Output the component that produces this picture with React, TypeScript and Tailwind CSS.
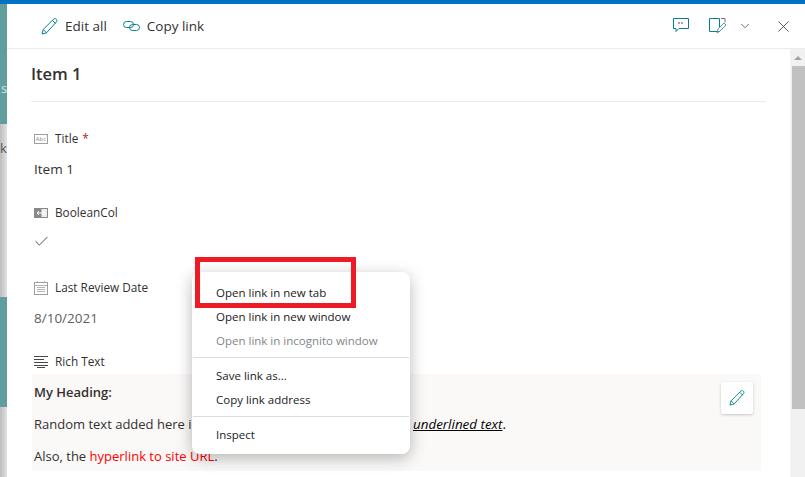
import { Check, ChevronDown, X } from 'lucide-react';

const sans = "font-['Open_Sans','Noto_Sans',sans-serif]";

function PencilIcon({ size }: { size: number }) {
  return (
    <svg width={size} height={size} viewBox="0 0 17 17" fill="none" stroke="#038387" strokeWidth="1">
      <path d="M1 16l1.200-4.500L12.500 1.200c.8-.8 2-.8 2.800 0s.8 2 0 2.800L5.500 14.800z" />
      <path d="M2.200 11.500l3.300 3.300M11.500 2.500l3 3" />
    </svg>
  );
}

function FieldLabel({ icon, children }: { icon: React.ReactNode; children: React.ReactNode }) {
  return (
    <div className="flex items-center h-5 text-[11.8px] text-[#323130]">
      <span className="w-[21px] ml-[3px] flex items-center">{icon}</span>
      {children}
    </div>
  );
}

function MenuItem({ label, muted }: { label: string; muted?: boolean }) {
  return (
    <div className={`h-6 flex items-center pl-6 text-[11.5px] ${muted ? 'text-[#80868b]' : 'text-[#202124]'}`}>{label}</div>
  );
}

export default function App() {
  return (
    <div className={`w-[805px] h-[477px] overflow-hidden flex flex-col relative bg-white ${sans}`}>
      <div className="h-1 shrink-0 bg-[#0072c6]" />
      <div className="flex flex-1 min-h-0">
        <div className="w-[7px] shrink-0 flex flex-col text-[13px] leading-none overflow-hidden">
          <div className="h-[120px] bg-[#5f9e9c] text-[#d5e6e5] pt-[78px] pl-px">s</div>
          <div className="h-[173px] bg-gradient-to-r from-[#bdbdbd] to-[#e2e2e2] text-[#555] pt-[18px]">k</div>
          <div className="h-[110px] bg-[#5f9e9c]" />
          <div className="flex-1 bg-gradient-to-r from-[#bdbdbd] to-[#e2e2e2]" />
        </div>
        <div className="flex-1 flex flex-col min-w-0">
          <div className="h-[45px] shrink-0 border-b border-[#edebe9] flex items-center pl-[34px] pr-[12px] text-[13.500px] text-[#323130]">
            <PencilIcon size={17} />
            <span className="ml-[7px]">Edit all</span>
            <svg width="17" height="12" viewBox="0 0 17 12" fill="none" stroke="#038387" className="ml-[16px]">
              <rect x="0.5" y="1.500" width="10" height="6" rx="3" />
              <rect x="6.500" y="4.500" width="10" height="6" rx="3" />
            </svg>
            <span className="ml-[7px]">Copy link</span>
            <div className="ml-auto flex items-center">
              <svg width="17" height="16" viewBox="0 0 17 16" fill="none" stroke="#038387">
                <path d="M.5.5h15v10H6l-3 3v-3H.5z" />
                <path d="M6 4v2M9 4v2" stroke="#555" />
              </svg>
              <svg width="18" height="16" viewBox="0 0 18 16" fill="none" stroke="#038387" className="ml-[19px]">
                <path d="M11 13.500H.5V.5h10v9" />
                <path d="M12 .5h4v4" stroke="#777" />
                <path d="M8 15l1-4 6-6 2 2-6 6z" stroke="#5a9aa8" />
              </svg>
              <ChevronDown size={14} strokeWidth={1.5} className="ml-[11px] text-[#605e5c]" />
              <X size={19} strokeWidth={1} className="ml-[22px] text-[#323130]" />
            </div>
          </div>
          <div className="flex-1 flex min-h-0">
            <div className="flex-1 min-w-0 pl-6 pr-6 overflow-hidden">
              <div className="h-[53px] border-b border-[#edebe9] flex items-center text-[16.500px] font-semibold text-[#323130] pb-[2px]">Item 1</div>
              <div className="mt-[27px]">
                <FieldLabel icon={<span className="w-[14px] h-[10px] border border-[#a19f9d] text-[6px] leading-none text-[#8a8886] flex items-center justify-center">Abc</span>}>
                  Title <span className="text-[#a4262c] ml-1">*</span>
                </FieldLabel>
                <div className="mt-[10px] ml-[3px] text-[13.500px] text-[#323130] h-5 leading-5">Item 1</div>
              </div>
              <div className="mt-[24px]">
                <FieldLabel icon={<svg width="14" height="10" viewBox="0 0 14 10"><rect width="14" height="10" fill="#8a8886" /><path d="M7 .5h6.500v9H7z" fill="#eee" stroke="#8a8886" /><path d="M3 5h8M5 3L3 5l2 2M9 3l2 2-2 2" stroke="#fff" fill="none" /></svg>}>
                  BooleanCol
                </FieldLabel>
                <div className="mt-[8px] ml-[2px] h-5 flex items-center"><Check size={17} strokeWidth={1.2} className="text-[#323130]" /></div>
              </div>
              <div className="mt-[27px]">
                <FieldLabel icon={<svg width="14" height="14" viewBox="0 0 14 14" fill="none" stroke="#a19f9d"><rect x=".5" y="1.500" width="13" height="12" /><path d="M.5 4.500h13M3 6.500h8M3 8.500h8M3 10.500h8M3.500 0v2M10.500 0v2" strokeWidth=".8" /></svg>}>
                  Last Review Date
                </FieldLabel>
                <div className="mt-[10px] ml-[3px] h-5 leading-5 text-[13.500px] text-[#605e5c]">8/10/2021</div>
              </div>
              <div className="mt-[24px]">
                <FieldLabel icon={<svg width="14" height="12" viewBox="0 0 14 12" stroke="#484644"><path d="M0 .5h14M0 3.500h10M0 6.500h14M0 9.500h14M3 11.500h8" /></svg>}>
                  Rich Text
                </FieldLabel>
                <div className="relative mt-[2px] ml-px mr-[5px] h-[97px] bg-[#faf9f8] pl-[2px] pt-[8px] text-[13px] leading-5 text-[#323130]">
                  <div className="font-semibold">My Heading:</div>
                  <div className="mt-[12px] whitespace-nowrap">
                    <span className="inline-block w-[379px]">Random text added here in</span>
                    <span className="text-black text-[13.400px]"><span className="italic underline">underlined text</span>.</span>
                  </div>
                  <div className="mt-3">Also, the <span className="text-[#ff0000]">hyperlink to site URL</span>.</div>
                  <button className="absolute top-2 right-2 w-8 h-8 bg-white rounded-[2px] shadow-[0_1px_3px_rgba(0,0,0,0.2)] flex items-center justify-center">
                    <PencilIcon size={16} />
                  </button>
                </div>
              </div>
            </div>
            <div className="w-[15px] shrink-0 bg-[#f1f1f1] flex flex-col items-end">
              <div className="w-full h-[17px] flex items-center justify-center">
                <div className="border-x-[4px] border-x-transparent border-b-[4px] border-b-[#a3a3a3]" />
              </div>
              <div className="w-[13px] h-[343px] bg-[#c1c1c1]" />
            </div>
          </div>
        </div>
      </div>

      <div className="absolute left-[192px] top-[272px] w-[218px] h-[182px] bg-white rounded-lg shadow-[0_4px_16px_rgba(0,0,0,0.28)] pt-[9px]">
        <MenuItem label="Open link in new tab" />
        <MenuItem label="Open link in new window" />
        <MenuItem label="Open link in incognito window" muted />
        <div className="h-px bg-[#dadce0] mt-[4px] mb-[6px] mx-px" />
        <MenuItem label="Save link as..." />
        <MenuItem label="Copy link address" />
        <div className="h-px bg-[#dadce0] mt-[4px] mb-[6px] mx-px" />
        <MenuItem label="Inspect" />
      </div>
      <div className="absolute left-[195px] top-[257px] w-[161px] h-[51px] border-[5px] border-[#ed1c24]" />
    </div>
  );
}
